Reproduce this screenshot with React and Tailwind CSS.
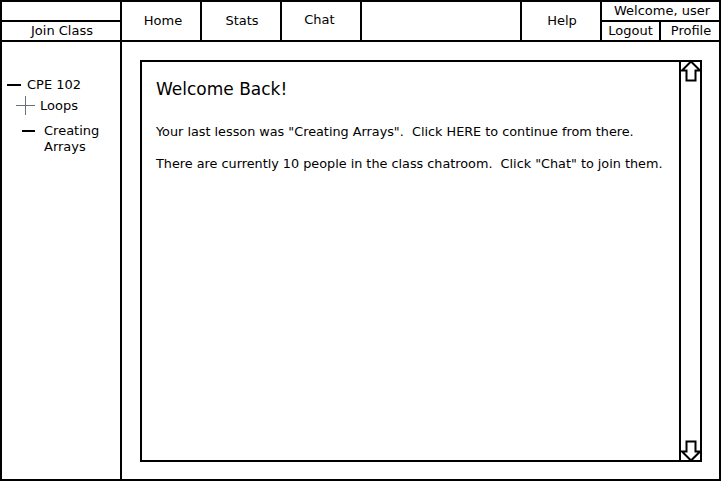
import React from 'react';

const NavCell = ({ label, className = '' }) => (
  <div className={`w-[80px] border-r-2 border-black flex items-center justify-center ${className}`}>
    <span>{label}</span>
  </div>
);

const Arrow = ({ down }) => (
  <svg width="20" height="22" viewBox="0 0 20 22" className={down ? 'rotate-180' : ''}>
    <path d="M10 1.5 L19 10.5 L14.5 10.5 L14.5 20.5 L5.5 20.5 L5.5 10.5 L1 10.5 Z" fill="white" stroke="black" strokeWidth="2" strokeLinejoin="miter" />
  </svg>
);

const App = () => {
  return (
    <div className="w-[721px] h-[481px] border-2 border-black bg-white text-black font-['DejaVu_Sans',sans-serif] text-[13px] leading-4 flex flex-col">
      {/* header */}
      <div className="h-[40px] border-b-2 border-black flex shrink-0">
        <div className="w-[120px] border-r-2 border-black flex flex-col">
          <div className="h-[20px] border-b-2 border-black"></div>
          <div className="flex-1 flex items-center justify-center pl-[2px]">Join Class</div>
        </div>
        <NavCell label="Home" className="pl-[4px]" />
        <NavCell label="Stats" className="pl-[2px]" />
        <NavCell label="Chat" className="pb-[2px] pr-[3px]" />
        <div className="w-[160px] border-r-2 border-black"></div>
        <NavCell label="Help" className="pl-[2px]" />
        <div className="flex-1 flex flex-col">
          <div className="h-[20px] border-b-2 border-black flex items-end justify-center pb-px pl-[3px]">Welcome, user</div>
          <div className="flex-1 flex">
            <div className="w-[59px] border-r-2 border-black flex items-center justify-center">Logout</div>
            <div className="flex-1 flex items-center justify-center pl-[2px]">Profile</div>
          </div>
        </div>
      </div>

      {/* body */}
      <div className="flex-1 flex">
        <aside className="w-[120px] border-r-2 border-black pt-[35px] shrink-0">
          <div className="flex items-center">
            <span className="ml-[5px] w-[14px] h-[2px] bg-black"></span>
            <span className="ml-[6px]">CPE 102</span>
          </div>
          <div className="flex items-center mt-[3px]">
            <span className="ml-[14px] relative w-[19px] h-[19px]">
              <span className="absolute left-0 top-[9px] w-[19px] h-px bg-gray-500"></span>
              <span className="absolute left-[9px] top-0 w-px h-[19px] bg-gray-500"></span>
            </span>
            <span className="ml-[5px]">Loops</span>
          </div>
          <div className="flex items-start mt-[8px]">
            <span className="ml-[20px] mt-[7px] w-[13px] h-[2px] bg-black"></span>
            <span className="ml-[9px]">Creating<br />Arrays</span>
          </div>
        </aside>

        <main className="flex-1 pl-[18px] pt-[18px]">
          <div className="w-[562px] h-[402px] border-2 border-black flex">
            <div className="flex-1 pl-[14px] pt-[17px]">
              <h1 className="text-[17px] leading-5">Welcome Back!</h1>
              <p className="text-[12.8px] leading-4 mt-[25px] whitespace-pre">Your last lesson was "Creating Arrays".  Click HERE to continue from there.</p>
              <p className="text-[12.8px] leading-4 mt-[16px] whitespace-pre">There are currently 10 people in the class chatroom.  Click "Chat" to join them.</p>
            </div>
            <div className="w-[21px] border-l-2 border-black flex flex-col justify-between items-center -mt-[2px] -mb-[2px]">
              <Arrow />
              <Arrow down />
            </div>
          </div>
        </main>
      </div>
    </div>
  );
};

export default App;
